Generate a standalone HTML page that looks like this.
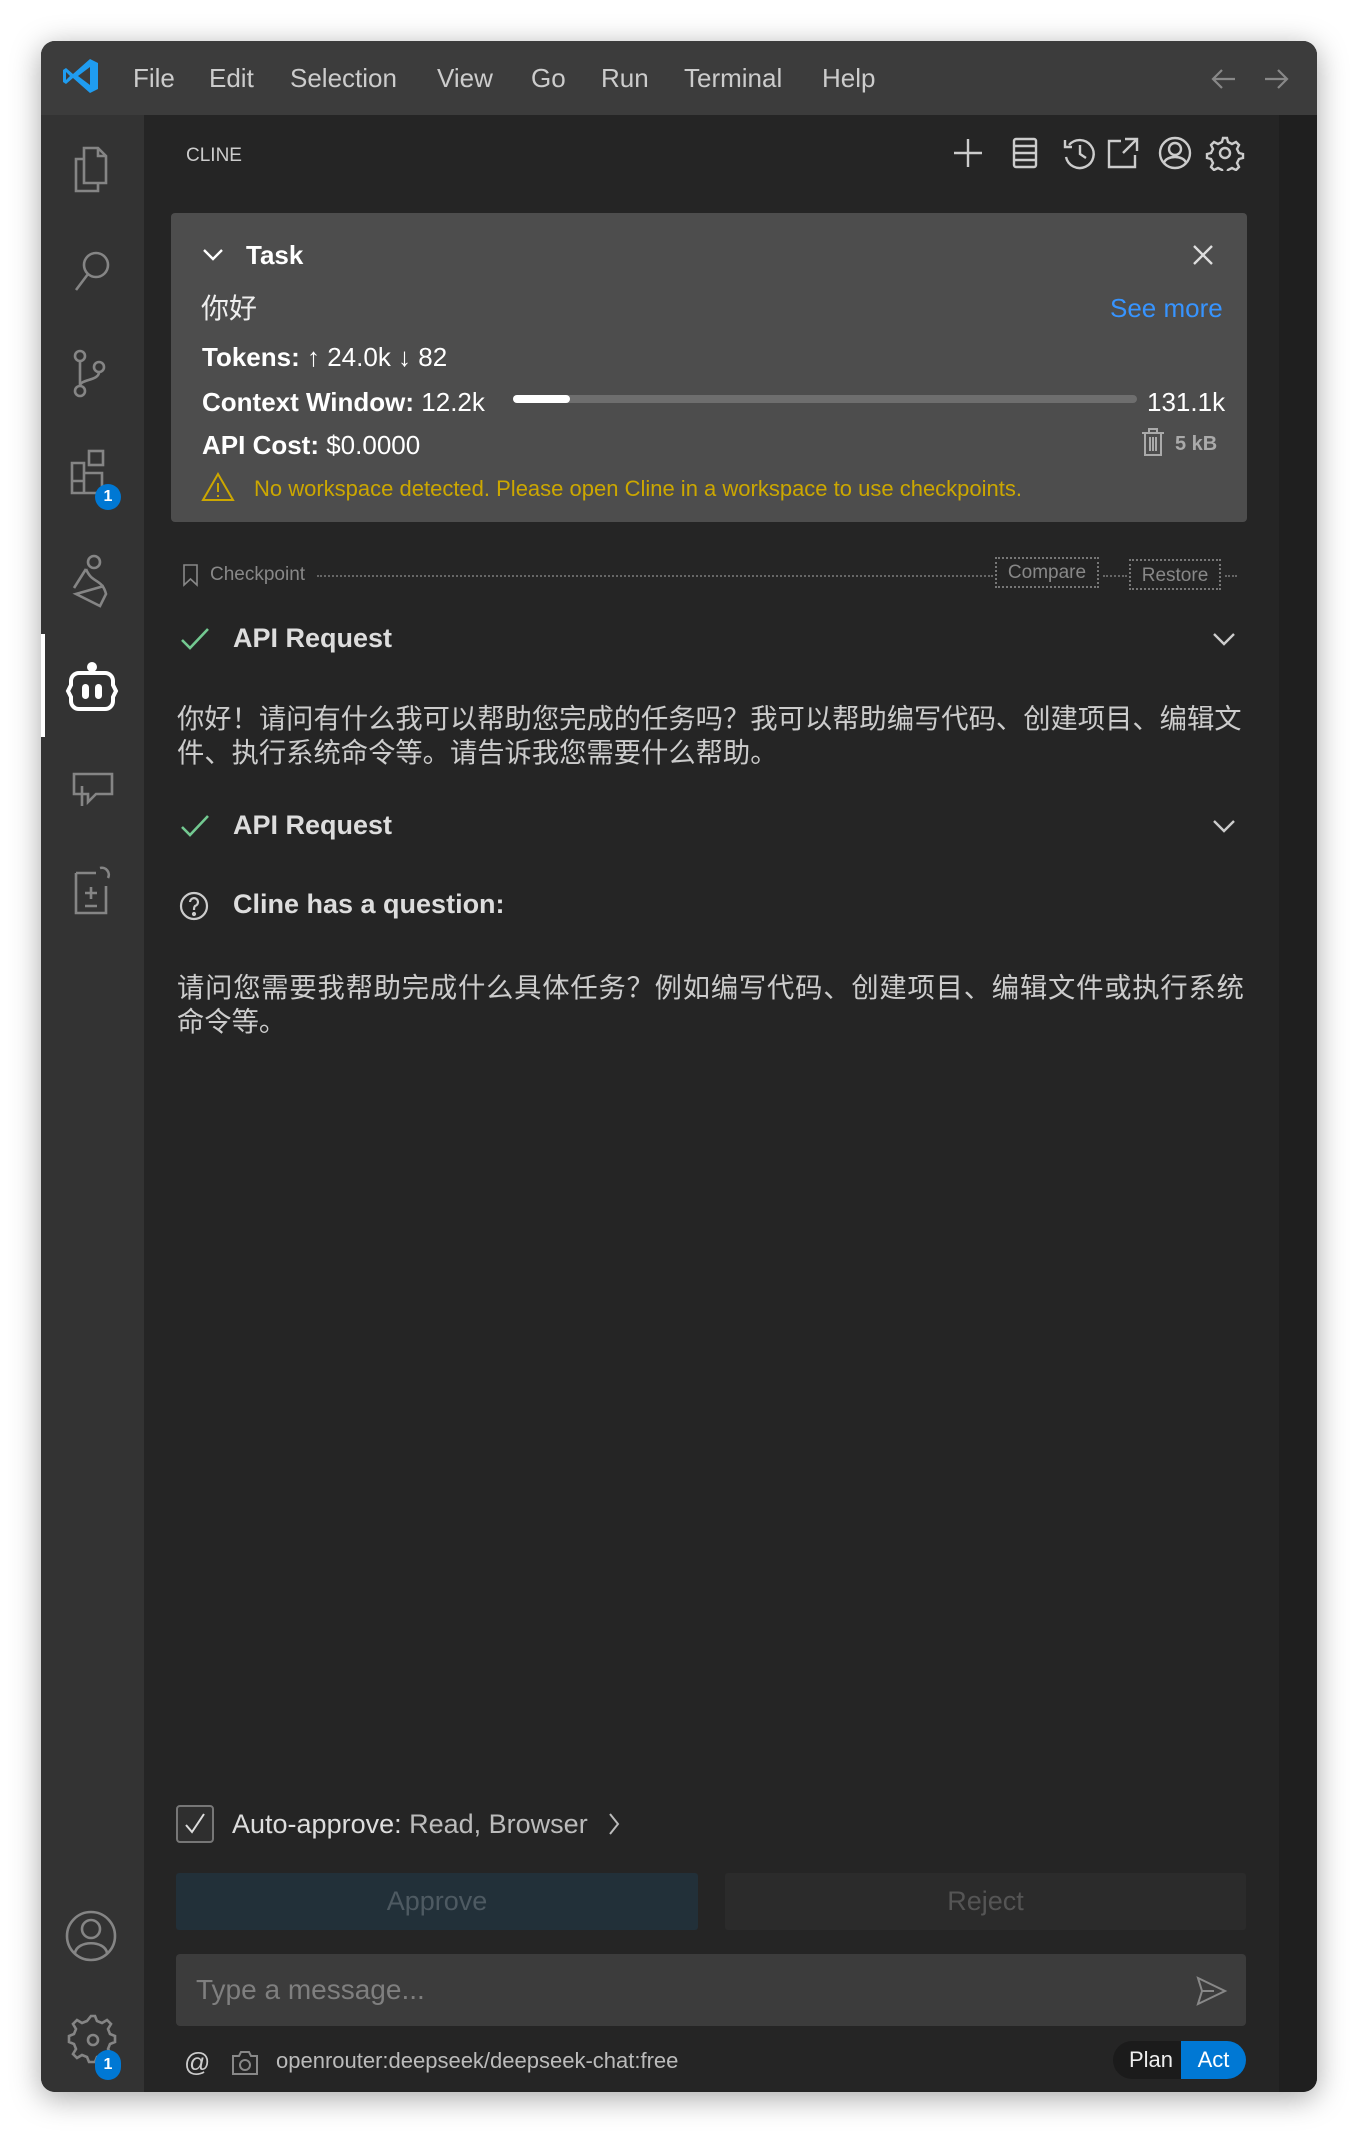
<!DOCTYPE html>
<html><head><meta charset="utf-8"><style>
*{margin:0;padding:0;box-sizing:border-box}
body{width:1357px;height:2132px;background:#fff;position:relative;overflow:hidden;font-family:"Liberation Sans","Noto Sans CJK SC",sans-serif;color:#ccc}
.a{position:absolute}
.win{left:41px;top:41px;width:1276px;height:2051px;border-radius:14px;overflow:hidden;background:#252525;box-shadow:0 6px 30px rgba(0,0,0,.35)}
.title{left:0;top:0;width:1276px;height:74px;background:#3c3c3c}
.menu{top:22px;font-size:26px;color:#ccc}
.act{left:0;top:74px;width:103px;height:1980px;background:#333}
.rstrip{left:1238px;top:74px;width:38px;height:1980px;background:#1f1f1f}
svg{position:absolute}
.t{position:absolute;white-space:nowrap}
.card{left:130px;top:172px;width:1076px;height:309px;background:#4d4d4d;border-radius:4px}
.b{font-weight:bold;color:#fff}
.zh{font-size:27.3px;line-height:34px;color:#ccc}
</style></head><body>
<div class="a win">
 <div class="a title"></div>
 <svg style="left:20px;top:15px" width="40" height="40" viewBox="0 0 40 40"><path d="M29 3 L37 7 V33 L29 37 L12 22 L5 28 L2 26 V14 L5 12 L12 18 Z" fill="#1f9cf0"/><path d="M29 11 V29 L17 20Z" fill="#3c3c3c"/><path d="M5 16 V24 L9 20Z" fill="#3c3c3c"/></svg>
 <div class="t menu" style="left:92px">File</div>
 <div class="t menu" style="left:168px">Edit</div>
 <div class="t menu" style="left:249px">Selection</div>
 <div class="t menu" style="left:396px">View</div>
 <div class="t menu" style="left:490px">Go</div>
 <div class="t menu" style="left:560px">Run</div>
 <div class="t menu" style="left:643px">Terminal</div>
 <div class="t menu" style="left:781px">Help</div>
 <svg style="left:1168px;top:24px" width="80" height="28" viewBox="0 0 80 28" fill="none" stroke="#888" stroke-width="2.2"><path d="M26 14H4M13 5L4 14L13 23"/><path d="M56 14H78M69 5L78 14L69 23"/></svg>
 <div class="a act"></div>
 <div class="a rstrip"></div>
 <div class="a" style="left:0;top:593px;width:4px;height:103px;background:#fff"></div>
 <svg style="left:25px;top:100px" width="52" height="800" viewBox="0 0 52 800" fill="none" stroke="#858585" stroke-width="2.6">
  <path d="M18 7H32L40 15V42H18Z M32 7V15H40 M18 18H10V50H32V42"/>
  <g transform="translate(0,10)"><circle cx="30" cy="114" r="12"/><path d="M22 123L10 139"/></g>
  <g transform="translate(0,28)"><circle cx="14" cy="187" r="5"/><circle cx="14" cy="222" r="5"/><circle cx="33" cy="198" r="5"/><path d="M14 192V217M33 203C33 212 14 210 14 217"/></g>
  <g transform="translate(0,22)"><path d="M6 300V330H36V310H18V300Z M18 300H6 M6 318H18 M18 310V330"/><rect x="23" y="288" width="14" height="14"/></g>
  <g transform="translate(0,33)"><path d="M8 414L20 395M20 395C26 410 36 404 40 420L34 432L10 420L38 412" /><circle cx="28" cy="388" r="6"/></g>
  <g transform="translate(0,20)"><path d="M8 613H46V633H30L22 641V633H8Z M16 625V645"/></g>
  <g transform="translate(0,27)"><path d="M10 705H30M10 705V745H40V718 M19 725H31M25 719V731M19 738H31 M34 700A7 7 0 0 1 42 710"/></g>
 </svg>
 <div class="a" style="left:54px;top:443px;width:26px;height:26px;border-radius:50%;background:#0078d4;color:#fff;font-size:16px;font-weight:bold;text-align:center;line-height:26px">1</div>
 <svg style="left:24px;top:620px" width="54" height="54" viewBox="0 0 54 54" fill="none"><circle cx="27" cy="6" r="5" fill="#fff"/><path d="M14 12H40A8 8 0 0 1 48 20V24L51 30L48 36V40A8 8 0 0 1 40 48H14A8 8 0 0 1 6 40V36L3 30L6 24V20A8 8 0 0 1 14 12Z" stroke="#fff" stroke-width="4"/><rect x="17" y="23" width="7" height="15" rx="3.5" fill="#fff"/><rect x="30" y="23" width="7" height="15" rx="3.5" fill="#fff"/></svg>
 <svg style="left:22px;top:1869px" width="58" height="160" viewBox="0 0 58 160" fill="none" stroke="#858585" stroke-width="2.6"><circle cx="28" cy="26" r="24"/><circle cx="28" cy="19" r="9"/><path d="M12 43C14 30 42 30 44 43"/><path d="M28 106l4 0l2 5l5 2l5-3l4 4l-3 5l2 5l5 2v6l-5 2l-2 5l3 5l-4 4l-5-3l-5 2l-2 5h-6l-2-5l-5-2l-5 3l-4-4l3-5l-2-5l-5-2v-6l5-2l2-5l-3-5l4-4l5 3l5-2z"/><circle cx="30" cy="130" r="5"/></svg>
 <div class="a" style="left:54px;top:2009px;width:26px;height:30px;border-radius:13px;background:#0078d4;color:#fff;font-size:16px;font-weight:bold;text-align:center;line-height:30px">1</div>

 <div class="t" style="left:145px;top:104px;font-size:19px;color:#ccc">CLINE</div>
 <svg style="left:910px;top:94px" width="310" height="36" viewBox="0 0 310 36" fill="none" stroke="#ccc" stroke-width="2.4">
  <path d="M17 4V32M3 18H31"/>
  <rect x="63" y="4" width="22" height="28" rx="2"/><path d="M63 11H85M63 18H85M63 25H85"/>
  <path d="M118 10A14 14 0 1 1 115 22M114 5V12H121M129 10V19L135 23"/>
  <path d="M170 6H158V32H184V20M174 4H186V16M186 4L172 18"/>
  <circle cx="224" cy="18" r="15"/><circle cx="224" cy="14" r="6"/><path d="M213 28C215 20 233 20 235 28"/>
  <path d="M272 3h4l1 4l4 2l4-2l3 3l-2 4l2 4l4 1v4l-4 1l-2 4l2 4l-3 3l-4-2l-4 2l-1 4h-4l-1-4l-4-2l-4 2l-3-3l2-4l-2-4l-4-1v-4l4-1l2-4l-2-4l3-3l4 2l4-2z"/><circle cx="274" cy="18" r="5"/>
 </svg>

 <div class="a card"></div>
 <svg style="left:161px;top:206px" width="22" height="16" viewBox="0 0 22 16" fill="none" stroke="#fff" stroke-width="2.4"><path d="M2 3L11 12L20 3"/></svg>
 <div class="t b" style="left:205px;top:199px;font-size:26px">Task</div>
 <svg style="left:1151px;top:203px" width="22" height="22" viewBox="0 0 22 22" stroke="#ddd" stroke-width="2.4"><path d="M2 2L20 20M20 2L2 20"/></svg>
 <div class="t" style="left:160px;top:246px;font-size:28px;color:#eee">你好</div>
 <div class="t" style="left:1069px;top:252px;font-size:26px;color:#3794ff">See more</div>
 <div class="t" style="left:161px;top:301px;font-size:26px;color:#fff"><b>Tokens:</b> ↑ 24.0k ↓ 82</div>
 <div class="t" style="left:161px;top:346px;font-size:26px;color:#fff"><b>Context Window:</b> 12.2k</div>
 <div class="a" style="left:472px;top:354px;width:624px;height:8px;border-radius:4px;background:#6e6e6e"></div>
 <div class="a" style="left:472px;top:354px;width:57px;height:8px;border-radius:4px;background:#fff"></div>
 <div class="t" style="left:1106px;top:346px;font-size:26px;color:#fff">131.1k</div>
 <div class="t" style="left:161px;top:389px;font-size:26px;color:#fff"><b>API Cost:</b> $0.0000</div>
 <svg style="left:1098px;top:386px" width="28" height="30" viewBox="0 0 28 30" fill="none" stroke="#aaa" stroke-width="2"><path d="M3 6H25M10 6V2H18V6M6 6V28H22V6M11 10V24M14 10V24M17 10V24"/></svg>
 <div class="t" style="left:1134px;top:392px;font-size:20px;font-weight:bold;color:#aaa">5 kB</div>
 <svg style="left:160px;top:431px" width="34" height="30" viewBox="0 0 34 30" fill="none" stroke="#cca700" stroke-width="2"><path d="M17 2L32 28H2Z"/><path d="M17 11V20M17 23V25"/></svg>
 <div class="t" style="left:213px;top:435px;font-size:22px;color:#cca700">No workspace detected. Please open Cline in a workspace to use checkpoints.</div>

 <svg style="left:140px;top:522px" width="20" height="24" viewBox="0 0 20 24" fill="none" stroke="#888" stroke-width="1.6"><path d="M3 2H16V22L9.5 16L3 22Z"/></svg>
 <div class="t" style="left:169px;top:523px;font-size:19px;color:#888">Checkpoint</div>
 <div class="a" style="left:276px;top:534px;width:676px;border-top:2px dotted #666"></div>
 <div class="a" style="left:954px;top:516px;width:104px;height:31px;border:2px dotted #777;font-size:19px;color:#888;text-align:center;line-height:27px">Compare</div>
 <div class="a" style="left:1062px;top:534px;width:24px;border-top:2px dotted #666"></div>
 <div class="a" style="left:1088px;top:518px;width:92px;height:31px;border:2px dotted #777;font-size:19px;color:#888;text-align:center;line-height:29px">Restore</div>
 <div class="a" style="left:1184px;top:534px;width:12px;border-top:2px dotted #666"></div>

 <svg style="left:139px;top:585px" width="30" height="26" viewBox="0 0 30 26" fill="none" stroke="#73c991" stroke-width="2.6"><path d="M2 14L10 22L28 3"/></svg>
 <div class="t b" style="left:192px;top:582px;font-size:27px;color:#ddd">API Request</div>
 <svg style="left:1171px;top:590px" width="24" height="16" viewBox="0 0 24 16" fill="none" stroke="#ccc" stroke-width="2.4"><path d="M2 3L12 13L22 3"/></svg>
 <div class="t zh" style="left:136px;top:661px">你好！请问有什么我可以帮助您完成的任务吗？我可以帮助编写代码、创建项目、编辑文</div>
 <div class="t zh" style="left:136px;top:695px">件、执行系统命令等。请告诉我您需要什么帮助。</div>

 <svg style="left:139px;top:772px" width="30" height="26" viewBox="0 0 30 26" fill="none" stroke="#73c991" stroke-width="2.6"><path d="M2 14L10 22L28 3"/></svg>
 <div class="t b" style="left:192px;top:769px;font-size:27px;color:#ddd">API Request</div>
 <svg style="left:1171px;top:777px" width="24" height="16" viewBox="0 0 24 16" fill="none" stroke="#ccc" stroke-width="2.4"><path d="M2 3L12 13L22 3"/></svg>

 <svg style="left:137px;top:849px" width="32" height="32" viewBox="0 0 32 32" fill="none" stroke="#ccc" stroke-width="2.2"><circle cx="16" cy="16" r="13"/><path d="M12 12A4 4 0 1 1 17 16C16 17 16 18 16 20"/><circle cx="16" cy="24" r="1" fill="#ccc"/></svg>
 <div class="t b" style="left:192px;top:848px;font-size:27px;color:#ddd">Cline has a question:</div>
 <div class="t zh" style="left:136px;top:930px;letter-spacing:0.8px">请问您需要我帮助完成什么具体任务？例如编写代码、创建项目、编辑文件或执行系统</div>
 <div class="t zh" style="left:136px;top:964px">命令等。</div>

 <div class="a" style="left:135px;top:1764px;width:38px;height:38px;border:2px solid #777;border-radius:4px;background:#2f2f2f"></div>
 <svg style="left:140px;top:1769px" width="28" height="28" viewBox="0 0 28 28" fill="none" stroke="#ddd" stroke-width="2"><path d="M5 15L11 22L23 4"/></svg>
 <div class="t" style="left:191px;top:1768px;font-size:27px;color:#ddd">Auto-approve: <span style="color:#bbb">Read, Browser</span></div>
 <svg style="left:566px;top:1770px" width="14" height="26" viewBox="0 0 14 26" fill="none" stroke="#bbb" stroke-width="2"><path d="M3 3L11 13L3 23"/></svg>

 <div class="a" style="left:135px;top:1832px;width:522px;height:57px;background:#223039;border-radius:3px;font-size:27px;color:#4e5a62;text-align:center;line-height:57px">Approve</div>
 <div class="a" style="left:684px;top:1832px;width:521px;height:57px;background:#2b2b2b;border-radius:3px;font-size:27px;color:#555;text-align:center;line-height:57px">Reject</div>

 <div class="a" style="left:135px;top:1913px;width:1070px;height:72px;background:#3c3c3c;border-radius:4px"></div>
 <div class="t" style="left:155px;top:1933px;font-size:28px;color:#7f7f7f">Type a message...</div>
 <svg style="left:1153px;top:1934px" width="34" height="32" viewBox="0 0 34 32" fill="none" stroke="#888" stroke-width="2"><path d="M4 3L31 16L4 29L8 16Z M8 16H20"/></svg>

 <div class="t" style="left:143px;top:2006px;font-size:26px;color:#ccc">@</div>
 <svg style="left:190px;top:2009px" width="28" height="26" viewBox="0 0 28 26" fill="none" stroke="#888" stroke-width="2"><path d="M2 6H8L10 2H18L20 6H26V24H2Z"/><circle cx="14" cy="15" r="5"/></svg>
 <div class="t" style="left:235px;top:2007px;font-size:22px;color:#bbb">openrouter:deepseek/deepseek-chat:free</div>
 <div class="a" style="left:1072px;top:2000px;width:133px;height:38px;border-radius:19px;background:#1b1b1b"></div>
 <div class="t" style="left:1088px;top:2006px;font-size:22px;color:#eee">Plan</div>
 <div class="a" style="left:1140px;top:2000px;width:65px;height:38px;border-radius:0 19px 19px 0;background:#0078d4;color:#fff;font-size:22px;text-align:center;line-height:38px">Act</div>
</div>
</body></html>
